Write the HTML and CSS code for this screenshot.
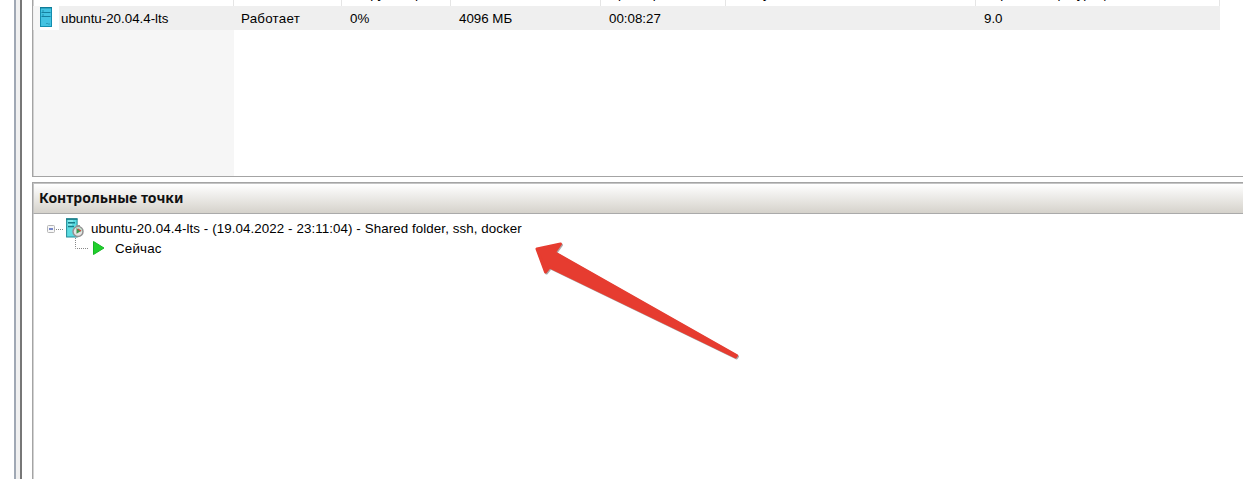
FILE: index.html
```
<!DOCTYPE html>
<html lang="ru">
<head>
<meta charset="utf-8">
<title>Контрольные точки</title>
<link rel="stylesheet" href="styles.css">
</head>
<body>
<div class="window">
  <div class="splitter"></div>
  <main class="panels">
    <section class="machines">
      <div class="row head">
        <span></span><span></span><span>Загрузка ЦП</span><span></span><span>Время работы</span><span>Статус</span><span>Версия конфигурации</span>
      </div>
      <div class="row vm">
        <span class="name">
          <svg class="server" viewBox="0 0 12 20">
            <rect x=".5" y=".5" width="11" height="19" fill="#43c3e2" stroke="#138eaf"/>
            <path d="M0 .7h12" stroke="#107c98" stroke-width="1.4"/>
            <path d="M1.5 5.5h9M1.5 9.5h9" stroke="#16809f" stroke-width="1.2"/>
            <path d="M2 4h2M2 8h2" stroke="#1e91af"/>
            <path d="M6.5 16.5h1M8.5 17h1" stroke="#147a96" stroke-width="1.2"/>
          </svg><span class="label">ubuntu-20.04.4-lts</span>
        </span>
        <span class="state">Работает</span><span>0%</span><span>4096 МБ</span><span>00:08:27</span><span></span><span>9.0</span>
      </div>
      <div class="space"></div>
    </section>
    <section class="checkpoints">
      <h2>Контрольные точки</h2>
      <div class="node root">
        <svg class="branch" viewBox="0 0 20 20">
          <rect x="1.5" y="7.5" width="7" height="7" rx="1" fill="#f7f7f7" stroke="#b5b5b5"/>
          <path d="M3 11h4" stroke="#4055b5" stroke-width="1.4"/>
          <path d="M10 11.5h8" stroke="#888" stroke-dasharray="1 1"/>
        </svg>
        <svg class="snapshot" viewBox="0 0 18 20">
          <rect x=".6" y="1" width="10.5" height="18" fill="#5bdce2" stroke="#208b97"/>
          <path d="M0 1h11.5M2 4.8h7M2 8.6h6" stroke="#187b87" stroke-width="1.5"/>
          <path d="M2 3h5M2 6.8h4" stroke="#a6f2f3"/>
          <path d="M10 7h4v2h-4z" fill="#999"/>
          <circle cx="12" cy="13.5" r="5" fill="#e4e4e4" stroke="#929292" stroke-width="1.5"/>
          <path d="M12 13.5V9a4.5 4.5 0 0 1 4 4.5z" fill="#bfe0c8"/>
          <path d="M10.5 10l4.5 3-4.5 2.8z" fill="#3c9a4d"/>
          <path d="M11.8 11l3.2 2" stroke="#d84444" stroke-width="1.3"/>
        </svg>
        <span class="title">ubuntu-20.04.4-lts - (19.04.2022 - 23:11:04) - Shared folder, ssh, docker</span>
      </div>
      <div class="node child">
        <svg class="elbow" viewBox="0 0 15 20"><path d="M.5 0v10.5H14" fill="none" stroke="#888" stroke-dasharray="1 1"/></svg>
        <svg class="play" viewBox="0 0 12 14"><path d="M.5.5L11 7 .5 13.5z" fill="#20cf2c" stroke="#15b725"/></svg>
        <span class="now">Сейчас</span>
      </div>
    </section>
  </main>
  <svg class="arrow" viewBox="0 0 215 130"><path d="M7 11L30.5 6 24.5 14.5 206.5 117.5 205.5 119 19.5 29 15.5 34Z" fill="#e63c30" stroke="#e63c30" stroke-width="3" stroke-linejoin="round"/></svg>
</div>
</body>
</html>
```
FILE: styles.css
```
* { box-sizing: border-box; }
body { margin: 0; background: #fff; color: #000; font: 13.33px/20px "Liberation Sans", Arial, sans-serif; }
.window { position: relative; display: flex; height: 479px; overflow: hidden; }
.splitter { width: 8px; margin-left: 14px; background: #f0f0f0; border-left: 2px solid #a0a8b4; border-right: 2px solid #777; }
.panels { flex: 1; margin-left: 10px; display: flex; flex-direction: column; gap: 5px; min-width: 0; }
.machines { height: 177px; border: 1px solid #a4a4a4; border-width: 0 0 1px 1px; box-shadow: inset 1px 0 #d2d2d2; display: flex; flex-direction: column; }
.row { display: grid; grid-template-columns: 201px 108px 109px 150px 125px 250px 244px; width: 1187px; white-space: nowrap; }
.head { height: 22px; margin-top: -16px; flex: none; }
.head > span { height: 22px; padding: 0 0 0 8px; border-right: 1px solid #e5e5e5; }
.vm { height: 24px; background: #efefef; align-items: center; }
.vm > span { padding: 1px 0 0 8px; }
.vm > .state { padding-left: 7px; letter-spacing: .25px; }
.vm > .name { height: 24px; display: flex; align-items: center; padding-left: 6px; margin-left: 1px; background: linear-gradient(90deg, #f6f6f6 6px, #fff 6px, #fff 25px, #efefef 25px); }
.server { width: 12px; height: 20px; margin-top: -3px; }
.label { margin-left: 9px; }
.space { flex: 1; width: 200px; margin-left: 1px; background: #f6f6f6; }
.checkpoints { flex: 1; border: 1px solid #a4a4a4; border-width: 1px 0 0 1px; box-shadow: inset 1px 0 #d2d2d2; }
h2 { margin: 0; height: 31px; padding: 0 5px; font: bold 14px/28px "Noto Sans", "Open Sans", sans-serif; color: #111; background: linear-gradient(#fff, #d5d2cb); border: 1px solid #c4c4c4; border-right: 0; border-bottom: 1px solid #aaa; }
.node { display: flex; align-items: center; height: 20px; white-space: nowrap; }
.node > span { padding-top: 1px; }
.root { margin-top: 4px; padding-left: 13px; }
.branch { width: 20px; height: 20px; }
.snapshot { width: 18px; height: 20px; margin-right: 7px; }
.title { letter-spacing: .09px; }
.child { padding-left: 42px; }
.elbow { width: 15px; height: 20px; margin-right: 3px; }
.play { width: 12px; height: 14px; margin-right: 10px; }
.now { letter-spacing: .2px; }
.arrow { position: absolute; left: 530px; top: 238px; width: 215px; height: 130px; filter: drop-shadow(1px 1px .7px #0005); }
```
